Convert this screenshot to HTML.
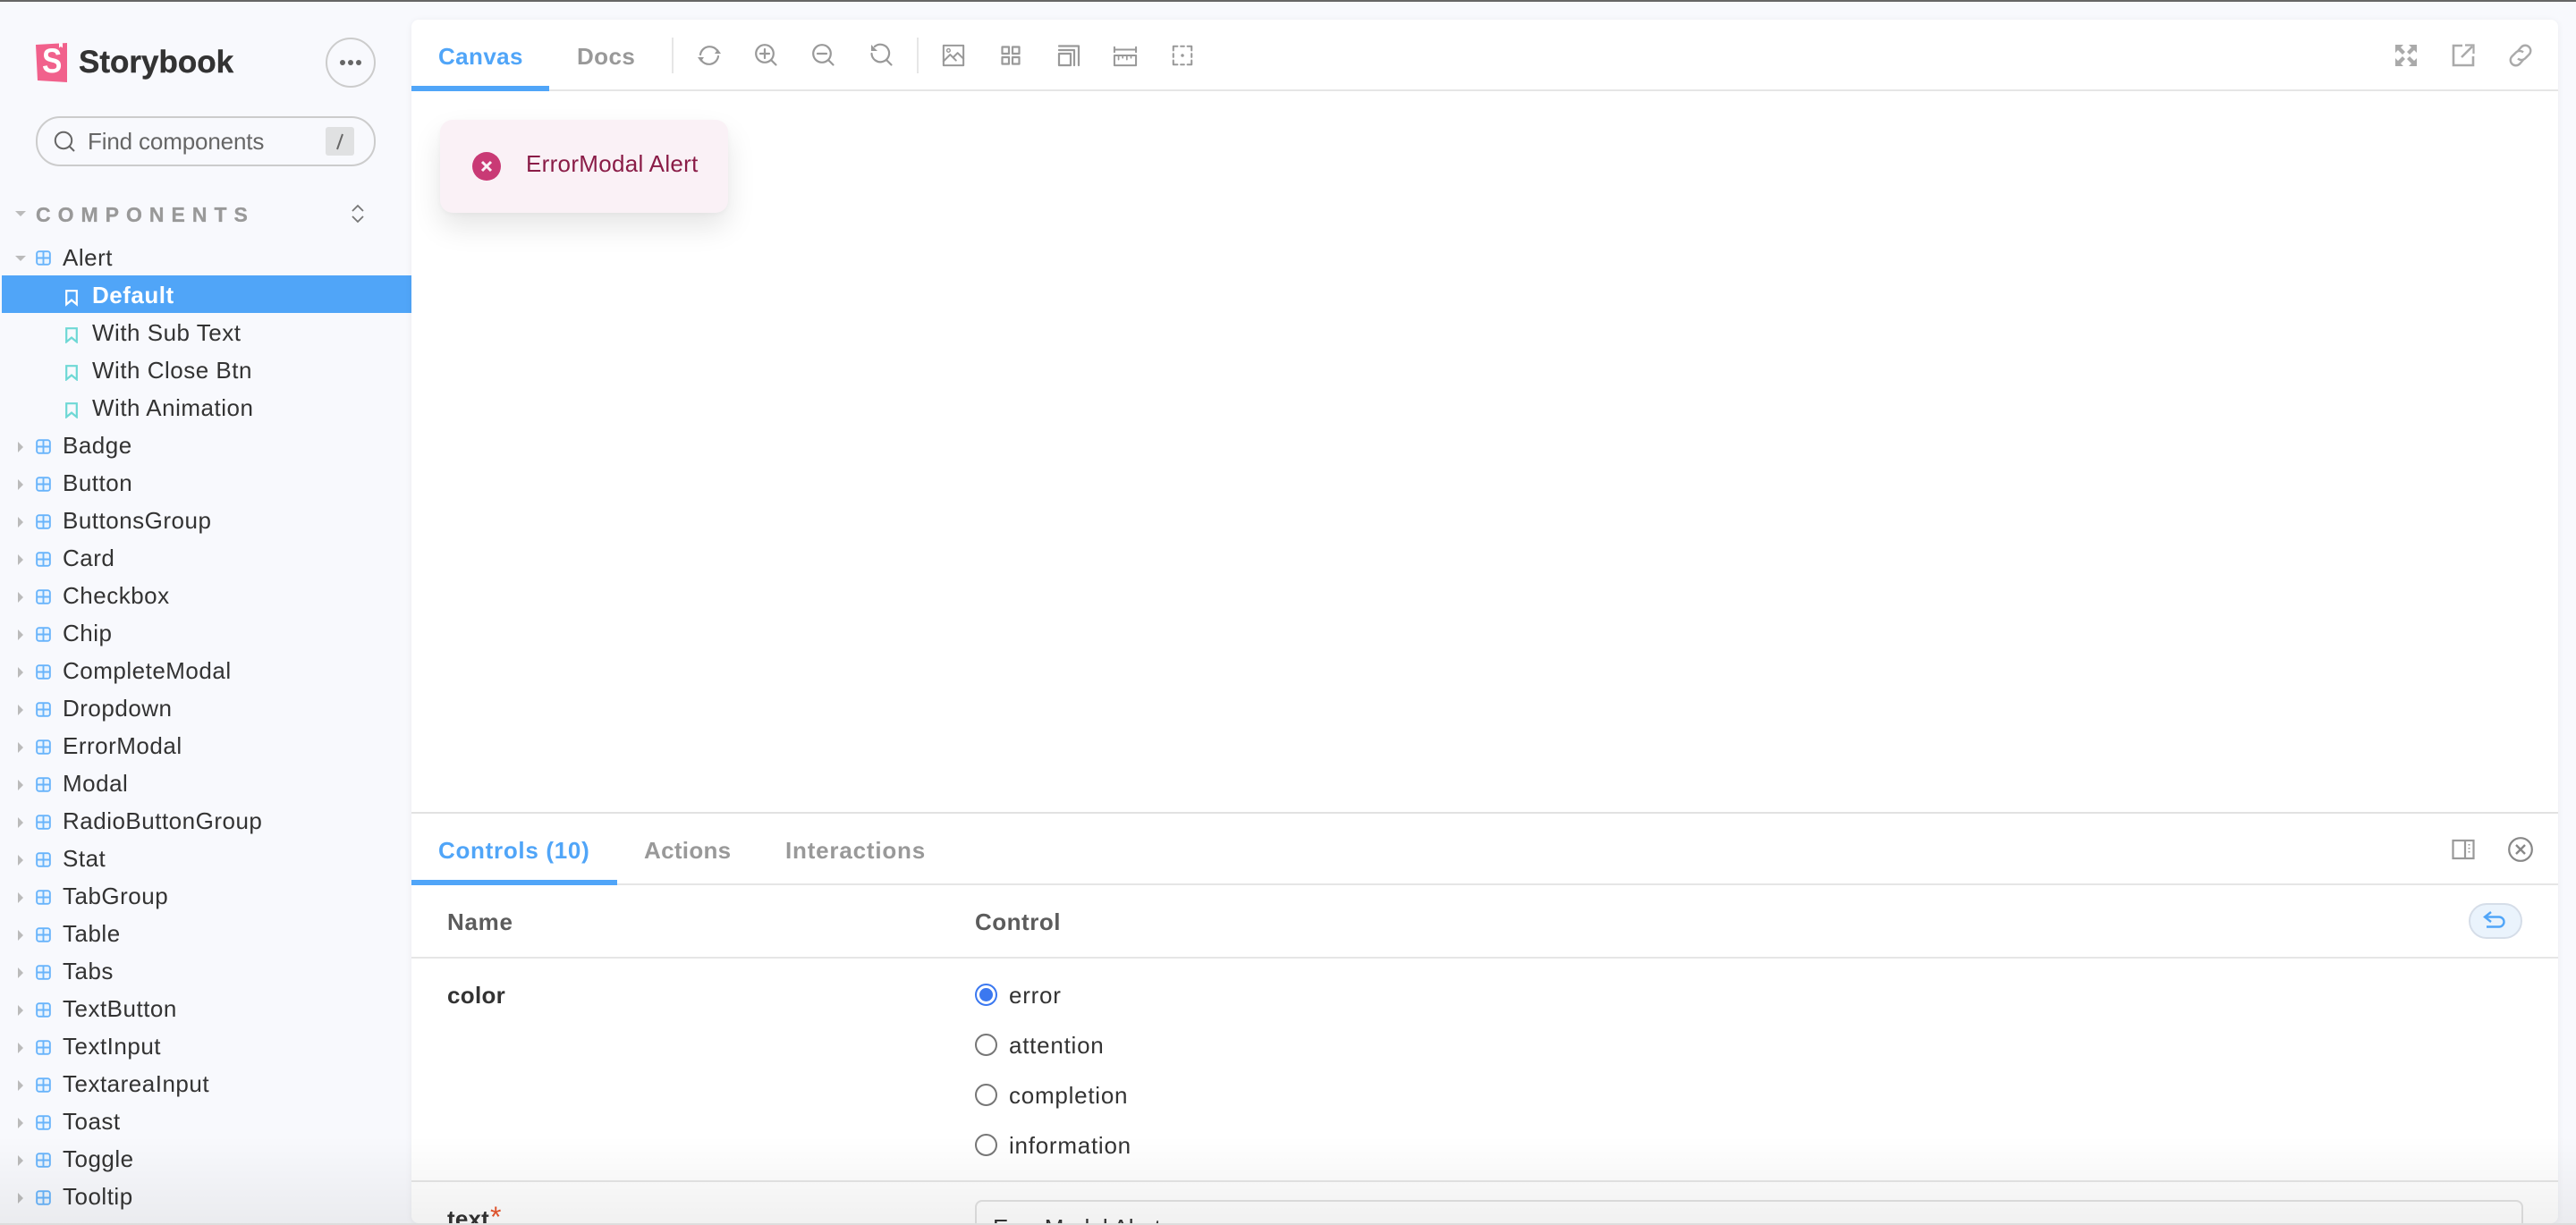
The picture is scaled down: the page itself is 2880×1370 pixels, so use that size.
<!DOCTYPE html>
<html><head><meta charset="utf-8"><title>Storybook</title>
<style>
html,body{margin:0;padding:0;width:2880px;height:1370px;overflow:hidden;background:#F8F9FD;font-family:"Liberation Sans",sans-serif;color:#333}
.a{position:absolute}
.t{position:absolute;white-space:nowrap;font-size:26px;line-height:42px;height:42px}
.r{position:absolute;left:70px;white-space:nowrap;font-size:26px;line-height:42px;height:42px;color:#333;letter-spacing:.5px}
.s{left:103px}
svg{position:absolute;overflow:visible}
.ic{fill:none;stroke:#999;stroke-width:2.2;stroke-linecap:round;stroke-linejoin:round}
.ar{position:absolute;left:20px;width:0;height:0;border-left:6px solid #BBB;border-top:6px solid transparent;border-bottom:6px solid transparent}
.ad{position:absolute;left:17px;width:0;height:0;border-top:6px solid #BBB;border-left:6px solid transparent;border-right:6px solid transparent}
.rad{position:absolute;left:1090px;width:21px;height:21px;border:2px solid #767676;border-radius:50%;background:#fff}
.rt{position:absolute;left:1128px;font-size:26px;line-height:40px;height:40px;color:#333;white-space:nowrap;letter-spacing:.75px}
</style></head><body>
<svg width="0" height="0" style="position:absolute"><defs>
<symbol id="grid" viewBox="0 0 18 18"><rect x="1.2" y="1.2" width="15.6" height="15.6" rx="2.8" fill="#EAF4FE" stroke="#69B4FB" stroke-width="2"/><path d="M9 1v16M1 9h16" stroke="#69B4FB" stroke-width="2" fill="none"/></symbol>
<symbol id="book" viewBox="0 0 14 18"><path d="M1.2 1.2h11.6v15.2L7 11.6l-5.8 4.8z" fill="none" stroke="#6ED8D5" stroke-width="2.2"/></symbol>
</defs></svg>

<div class="a" style="left:0;top:0;width:2880px;height:2px;background:#666"></div>

<!-- Sidebar -->
<svg style="left:40px;top:47px" width="36" height="46" viewBox="0 0 36 46"><path d="M0 3L35 1v44L2 43z" fill="#F1618C"/><path d="M26 1.500v5l2-1.500 2 1.500V1.300z" fill="#fff"/></svg>
<div class="t" style="left:47px;top:46px;font-size:39px;line-height:46px;height:46px;font-weight:700;color:#fff;transform:scaleX(.86);transform-origin:0 0">S</div>
<div class="t" style="left:88px;top:47px;font-size:35px;line-height:46px;height:46px;font-weight:700;color:#333;-webkit-text-stroke:.4px #333">Storybook</div>
<div class="a" style="left:364px;top:42px;width:52px;height:52px;border:2px solid #CCC;border-radius:50%"></div>
<div class="a" style="left:380px;top:67px;width:6px;height:6px;border-radius:50%;background:#666;box-shadow:9px 0 0 #666,18px 0 0 #666"></div>
<div class="a" style="left:40px;top:130px;width:376px;height:52px;border:2px solid #CCC;border-radius:27px"></div>
<svg style="left:60px;top:146px" width="24" height="24" viewBox="0 0 24 24"><circle cx="11" cy="11" r="9.200" fill="none" stroke="#666" stroke-width="2"/><path d="M17.500 17.500L23 23" stroke="#666" stroke-width="2" fill="none"/></svg>
<div class="t" style="left:98px;top:137px;color:#666;letter-spacing:-.15px">Find components</div>
<div class="a" style="left:364px;top:142px;width:32px;height:32px;background:#E0E1E2;border-radius:3px"></div>
<svg style="left:374px;top:149px" width="12" height="20" viewBox="0 0 12 20"><path d="M9 1L3 18" stroke="#666" stroke-width="2" fill="none"/></svg>

<div class="a" style="left:17px;top:236px;width:0;height:0;border-top:6px solid #BBB;border-left:6px solid transparent;border-right:6px solid transparent"></div>
<div class="t" style="left:40px;top:219px;font-size:23px;font-weight:700;color:#999;letter-spacing:8px;-webkit-text-stroke:.3px #999">COMPONENTS</div>
<svg style="left:392px;top:228px" width="16" height="22" viewBox="0 0 16 22"><path d="M2 8l6-6 6 6M2 14l6 6 6-6" fill="none" stroke="#777" stroke-width="1.800"/></svg>

<div class="a" style="left:2px;top:308px;width:458px;height:42px;background:#50A5F8"></div>

<div class="ad" style="top:286px"></div><svg style="left:40px;top:280px" width="17" height="17"><use href="#grid"/></svg><div class="r" style="top:267px">Alert</div>
<svg style="left:73px;top:324px" width="14" height="18" viewBox="0 0 14 18"><path d="M1.200 1.200h11.600v15.200L7 11.600l-5.800 4.800z" fill="none" stroke="#fff" stroke-width="2.200"/></svg><div class="r s" style="top:309px;color:#fff;font-weight:700">Default</div>
<svg style="left:73px;top:366px" width="14" height="18"><use href="#book"/></svg><div class="r s" style="top:351px">With Sub Text</div>
<svg style="left:73px;top:408px" width="14" height="18"><use href="#book"/></svg><div class="r s" style="top:393px">With Close Btn</div>
<svg style="left:73px;top:450px" width="14" height="18"><use href="#book"/></svg><div class="r s" style="top:435px">With Animation</div>

<div class="ar" style="top:494px"></div><svg style="left:40px;top:491px" width="17" height="17"><use href="#grid"/></svg><div class="r" style="top:477px">Badge</div>
<div class="ar" style="top:536px"></div><svg style="left:40px;top:533px" width="17" height="17"><use href="#grid"/></svg><div class="r" style="top:519px">Button</div>
<div class="ar" style="top:578px"></div><svg style="left:40px;top:575px" width="17" height="17"><use href="#grid"/></svg><div class="r" style="top:561px">ButtonsGroup</div>
<div class="ar" style="top:620px"></div><svg style="left:40px;top:617px" width="17" height="17"><use href="#grid"/></svg><div class="r" style="top:603px">Card</div>
<div class="ar" style="top:662px"></div><svg style="left:40px;top:659px" width="17" height="17"><use href="#grid"/></svg><div class="r" style="top:645px">Checkbox</div>
<div class="ar" style="top:704px"></div><svg style="left:40px;top:701px" width="17" height="17"><use href="#grid"/></svg><div class="r" style="top:687px">Chip</div>
<div class="ar" style="top:746px"></div><svg style="left:40px;top:743px" width="17" height="17"><use href="#grid"/></svg><div class="r" style="top:729px">CompleteModal</div>
<div class="ar" style="top:788px"></div><svg style="left:40px;top:785px" width="17" height="17"><use href="#grid"/></svg><div class="r" style="top:771px">Dropdown</div>
<div class="ar" style="top:830px"></div><svg style="left:40px;top:827px" width="17" height="17"><use href="#grid"/></svg><div class="r" style="top:813px">ErrorModal</div>
<div class="ar" style="top:872px"></div><svg style="left:40px;top:869px" width="17" height="17"><use href="#grid"/></svg><div class="r" style="top:855px">Modal</div>
<div class="ar" style="top:914px"></div><svg style="left:40px;top:911px" width="17" height="17"><use href="#grid"/></svg><div class="r" style="top:897px">RadioButtonGroup</div>
<div class="ar" style="top:956px"></div><svg style="left:40px;top:953px" width="17" height="17"><use href="#grid"/></svg><div class="r" style="top:939px">Stat</div>
<div class="ar" style="top:998px"></div><svg style="left:40px;top:995px" width="17" height="17"><use href="#grid"/></svg><div class="r" style="top:981px">TabGroup</div>
<div class="ar" style="top:1040px"></div><svg style="left:40px;top:1037px" width="17" height="17"><use href="#grid"/></svg><div class="r" style="top:1023px">Table</div>
<div class="ar" style="top:1082px"></div><svg style="left:40px;top:1079px" width="17" height="17"><use href="#grid"/></svg><div class="r" style="top:1065px">Tabs</div>
<div class="ar" style="top:1124px"></div><svg style="left:40px;top:1121px" width="17" height="17"><use href="#grid"/></svg><div class="r" style="top:1107px">TextButton</div>
<div class="ar" style="top:1166px"></div><svg style="left:40px;top:1163px" width="17" height="17"><use href="#grid"/></svg><div class="r" style="top:1149px">TextInput</div>
<div class="ar" style="top:1208px"></div><svg style="left:40px;top:1205px" width="17" height="17"><use href="#grid"/></svg><div class="r" style="top:1191px">TextareaInput</div>
<div class="ar" style="top:1250px"></div><svg style="left:40px;top:1247px" width="17" height="17"><use href="#grid"/></svg><div class="r" style="top:1233px">Toast</div>
<div class="ar" style="top:1292px"></div><svg style="left:40px;top:1289px" width="17" height="17"><use href="#grid"/></svg><div class="r" style="top:1275px">Toggle</div>
<div class="ar" style="top:1334px"></div><svg style="left:40px;top:1331px" width="17" height="17"><use href="#grid"/></svg><div class="r" style="top:1317px">Tooltip</div>

<!-- Main panel -->
<div class="a" style="left:460px;top:22px;width:2400px;height:1346px;background:#fff;border-radius:8px;box-shadow:0 1px 8px rgba(0,0,0,.06);overflow:hidden">
  <div class="a" style="left:0;top:78px;width:2400px;height:2px;background:#E6E6E6"></div>
  <div class="a" style="left:0;top:74px;width:154px;height:6px;background:#50A5F8"></div>
  <div class="a" style="left:0;top:886px;width:2400px;height:2px;background:#E2E2E2"></div>
  <div class="a" style="left:0;top:966px;width:2400px;height:2px;background:#E6E6E6"></div>
  <div class="a" style="left:0;top:962px;width:230px;height:6px;background:#50A5F8"></div>
  <div class="a" style="left:0;top:1048px;width:2400px;height:2px;background:#E6E6E6"></div>
  <div class="a" style="left:0;top:1298px;width:2400px;height:2px;background:#E6E6E6"></div>
  <div class="a" style="left:630px;top:1320px;width:1727px;height:60px;border:2px solid #E2E2E2;border-radius:8px;background:#fff"></div>
</div>

<div class="t" style="left:490px;top:42px;font-weight:700;color:#50A5F8;letter-spacing:.4px">Canvas</div>
<div class="t" style="left:645px;top:42px;font-weight:700;color:#999;letter-spacing:.4px">Docs</div>
<div class="a" style="left:751px;top:42px;width:2px;height:40px;background:#E6E6E6"></div>
<div class="a" style="left:1025px;top:42px;width:2px;height:40px;background:#E6E6E6"></div>

<!-- Toolbar icons -->
<svg class="ic" style="left:779px;top:48px" width="28" height="28" viewBox="0 0 28 28"><path d="M4 13A10.500 10.500 0 0 1 23.500 9.500"/><path d="M24 15A10.500 10.500 0 0 1 4.500 18.500"/><path d="M20 12h7l-3.500-5zM1 16h7l-3.500 5z" fill="#999" stroke="none"/></svg>
<svg class="ic" style="left:842px;top:48px" width="28" height="28" viewBox="0 0 28 28"><circle cx="13" cy="12" r="9.800"/><path d="M20 19l5.500 5.500M13 7v10M8 12h10"/></svg>
<svg class="ic" style="left:906px;top:48px" width="28" height="28" viewBox="0 0 28 28"><circle cx="13" cy="12" r="9.800"/><path d="M20 19l5.500 5.500M8 12h10"/></svg>
<svg class="ic" style="left:971px;top:48px" width="28" height="28" viewBox="0 0 28 28"><path d="M7 4A9.800 9.800 0 1 1 3.500 12"/><path d="M20 19l5.500 5.500"/><path d="M3 2v7h7z" fill="#999" stroke="none"/></svg>
<svg class="ic" style="left:1053px;top:49px" width="26" height="26" viewBox="0 0 28 28"><rect x="2" y="2" width="24" height="24"/><circle cx="8" cy="8" r="2" stroke-width="1.500"/><path d="M2 21l8-8 7 7M14 16l5-5 7 7"/></svg>
<svg class="ic" style="left:1117px;top:49px" width="26" height="26" viewBox="0 0 26 26"><rect x="3.500" y="3.500" width="7.500" height="7.500"/><rect x="15" y="3.500" width="7.500" height="7.500"/><rect x="3.500" y="15" width="7.500" height="7.500"/><rect x="15" y="15" width="7.500" height="7.500"/></svg>
<svg class="ic" style="left:1181px;top:49px" width="26" height="26" viewBox="0 0 26 26"><rect x="3" y="11" width="13" height="13"/><path d="M3 7h17v17M3 2.500h22V24"/></svg>
<svg class="ic" style="left:1245px;top:49px" width="26" height="26" viewBox="0 0 28 28"><path d="M1 4v6M27 4v6M1 7h26"/><rect x="1" y="14" width="26" height="12"/><path d="M6 14v5M11 14v3M16 14v5M21 14v3" stroke-width="1.800"/></svg>
<svg class="ic" style="left:1309px;top:49px" width="26" height="26" viewBox="0 0 28 28"><path d="M8 3H3v5M20 3h5v5M8 25H3v-5M20 25h5v-5M12 3h4M12 25h4M3 12v4M25 12v4"/><circle cx="14" cy="14" r=".8" fill="#999"/></svg>

<svg style="left:2676px;top:48px" width="28" height="28" viewBox="0 0 28 28" fill="#AAA"><path d="M2 2h9l-3 3 5 5-3 3-5-5-3 3zM26 2v9l-3-3-5 5-3-3 5-5-3-3zM2 26v-9l3 3 5-5 3 3-5 5 3 3zM26 26h-9l3-3-5-5 3-3 5 5 3-3z"/></svg>
<svg style="left:2740px;top:48px" width="28" height="28" viewBox="0 0 28 28" fill="none" stroke="#AAA" stroke-width="2.600"><path d="M13 3H3v22h22V15"/><path d="M12 16L24 4"/><path d="M16 2.500h9.500V12" stroke-width="2.200"/></svg>
<svg style="left:2804px;top:48px" width="28" height="28" viewBox="0 0 28 28" fill="none" stroke="#AAA" stroke-width="2.400"><path d="M11 9l4-4.500a6 6 0 0 1 8.500 8.500L19 17.500a6 6 0 0 1-8 0"/><path d="M17 19l-4 4.500a6 6 0 0 1-8.500-8.500L9 10.500a6 6 0 0 1 8 0"/></svg>

<!-- Alert -->
<div class="a" style="left:492px;top:134px;width:322px;height:104px;background:#FAF1F6;border-radius:14px;box-shadow:0 16px 32px rgba(0,0,0,.10),0 2px 6px rgba(0,0,0,.03)"></div>
<svg style="left:528px;top:170px" width="32" height="32" viewBox="0 0 32 32"><circle cx="16" cy="16" r="16" fill="#C93A75"/><path d="M11 11l10 10M21 11L11 21" stroke="#FAF1F6" stroke-width="3" fill="none"/></svg>
<div class="t" style="left:588px;top:162px;color:#8A1C47;letter-spacing:.3px">ErrorModal Alert</div>

<!-- Addon tabs -->
<div class="t" style="left:490px;top:930px;font-weight:700;color:#50A5F8;letter-spacing:.7px">Controls (10)</div>
<div class="t" style="left:720px;top:930px;font-weight:700;color:#999;letter-spacing:.3px">Actions</div>
<div class="t" style="left:878px;top:930px;font-weight:700;color:#999;letter-spacing:.8px">Interactions</div>

<svg style="left:2740px;top:936px" width="28" height="28" viewBox="0 0 28 28" fill="none" stroke="#999" stroke-width="2.200"><rect x="2.500" y="4" width="23" height="20"/><path d="M16 4v20"/><path d="M20.500 8v1.500M20.500 12v1.500M20.500 16v1.500" stroke-width="2"/></svg>
<svg style="left:2804px;top:936px" width="28" height="28" viewBox="0 0 28 28" fill="none" stroke="#888" stroke-width="2.200"><circle cx="14" cy="14" r="12.800"/><path d="M9 9l10 10M19 9L9 19" stroke-width="2.400"/></svg>

<!-- Table -->
<div class="t" style="left:500px;top:1010px;font-weight:700;color:#5C5C5C;letter-spacing:.7px">Name</div>
<div class="t" style="left:1090px;top:1010px;font-weight:700;color:#5C5C5C;letter-spacing:.5px">Control</div>
<div class="a" style="left:2760px;top:1010px;width:56px;height:36px;background:#EAF3FC;border:2px solid #D5DDE8;border-radius:20px"></div>
<svg style="left:2776px;top:1019px" width="26" height="22" viewBox="0 0 26 22" fill="none" stroke="#50A5F8" stroke-width="2.400"><path d="M9 1L2 6.500 9 12"/><path d="M2 6.500h16a5.500 5.500 0 0 1 0 11H4"/></svg>

<div class="t" style="left:500px;top:1092px;font-weight:700;color:#333;letter-spacing:.3px">color</div>
<div class="rad" style="top:1100px;border-color:#3B78F0"></div>
<div class="a" style="left:1095px;top:1105px;width:15px;height:15px;border-radius:50%;background:#3B78F0"></div>
<div class="rt" style="top:1093px">error</div>
<div class="rad" style="top:1156px"></div>
<div class="rt" style="top:1149px">attention</div>
<div class="rad" style="top:1212px"></div>
<div class="rt" style="top:1205px">completion</div>
<div class="rad" style="top:1268px"></div>
<div class="rt" style="top:1261px">information</div>

<div class="t" style="left:500px;top:1342px;font-weight:700;color:#333;height:26px;overflow:hidden;letter-spacing:.2px">text<span style="color:#E8562E;font-weight:400;font-size:32px;line-height:32px;margin-left:1px">*</span></div>
<div class="t" style="left:1110px;top:1352px;color:#333;height:16px;overflow:hidden">ErrorModal Alert</div>

<!-- Bottom fade -->
<div class="a" style="left:0;top:1270px;width:2880px;height:98px;background:linear-gradient(to bottom,rgba(0,0,0,0),rgba(0,0,0,.055))"></div>
<div class="a" style="left:0;top:1368px;width:2880px;height:2px;background:#DDD"></div>
</body></html>
